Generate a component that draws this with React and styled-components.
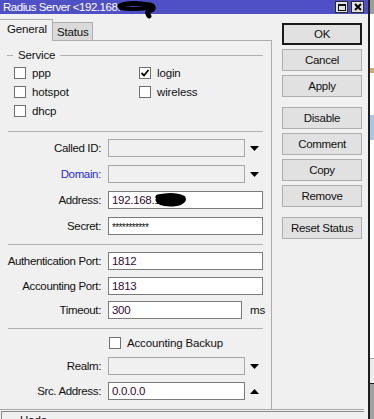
import React from 'react';
import styled, { createGlobalStyle } from 'styled-components';

const Global = createGlobalStyle`
  html, body { margin: 0; padding: 0; background: #ffffff; }
  body { font-family: "Liberation Sans", Arial, sans-serif; }
  #root { width: 374px; height: 419px; overflow: hidden; }
`;

const Page = styled.div`
  display: flex;
  width: 374px;
  height: 419px;
  overflow: hidden;
`;

const Window = styled.div`
  width: 368px;
  height: 419px;
  flex-shrink: 0;
  background: #f0f0f0;
  border-right: 2px solid #1c1c1c;
  display: flex;
  flex-direction: column;
  overflow: hidden;
  font-size: 11px;
  letter-spacing: -0.15px;
  color: #111;
`;

const TitleBar = styled.div`
  height: 14px;
  flex-shrink: 0;
  background: #4f4fc6;
  color: #fff;
  display: flex;
  align-items: center;
  padding-left: 3px;
  position: relative;
`;

const TitleText = styled.span`
  font-size: 11.5px;
  letter-spacing: -0.45px;
  line-height: 14px;
`;

const Scribble = styled.svg`
  position: absolute;
  overflow: visible;
`;

const TitleButtons = styled.div`
  margin-left: auto;
  margin-right: 4px;
  display: flex;
  gap: 3px;
`;

const TitleButton = styled.div`
  width: 13px;
  height: 12px;
  box-sizing: border-box;
  background: #e2e2e2;
  border: 1px solid #2a2a2a;
  display: flex;
  align-items: center;
  justify-content: center;
`;

const MaxGlyph = styled.div`
  width: 8px;
  height: 7px;
  box-sizing: border-box;
  border: 1px solid #111;
  border-top-width: 2px;
`;

const Body = styled.div`
  flex: 1;
  display: flex;
  min-height: 0;
`;

const LeftColumn = styled.div`
  width: 272px;
  padding-top: 5px;
  display: flex;
  flex-direction: column;
`;

const TabRow = styled.div`
  display: flex;
  align-items: flex-end;
  height: 22px;
  flex-shrink: 0;
`;

const Tab = styled.div`
  box-sizing: border-box;
  width: ${p => p.$width}px;
  height: ${p => (p.$active ? 22 : 19)}px;
  background: ${p => (p.$active ? '#f0f0f0' : '#dadada')};
  border-top: 1px solid #adadad;
  border-right: 1px solid #adadad;
  border-bottom: ${p => (p.$active ? 'none' : '1px solid #adadad')};
  padding-left: ${p => (p.$active ? 7 : 4)}px;
  display: flex;
  align-items: center;
  font-size: 11.5px;
  padding-bottom: ${p => (p.$active ? 3 : 0)}px;
`;

const TabFill = styled.div`
  flex: 1;
  height: 1px;
  background: #adadad;
`;

const Panel = styled.div`
  box-sizing: border-box;
  height: 368px;
  border-right: 1px solid #adadad;
  padding-top: 8px;
  display: flex;
  flex-direction: column;
`;

const Legend = styled.div`
  display: flex;
  align-items: center;
  height: 12px;
  margin-left: 7px;
  width: 256px;
  gap: 5px;
  font-size: 11.5px;
`;

const LegendLine = styled.div`
  height: 1px;
  background: #b0b0b0;
  flex: ${p => (p.$grow ? 1 : 'none')};
  width: ${p => (p.$grow ? 'auto' : '6px')};
`;

const CheckGrid = styled.div`
  display: grid;
  grid-template-columns: 125px 125px;
  row-gap: 7px;
  margin-top: 6px;
  padding-left: 14px;
`;

const CheckItem = styled.div`
  display: flex;
  align-items: center;
  gap: 6px;
  height: 12px;
  margin-left: ${p => p.$indent || 0}px;
  margin-top: ${p => p.$top || 0}px;
  font-size: 11.5px;
`;

const Box = styled.div`
  width: 12px;
  height: 12px;
  box-sizing: border-box;
  background: #fff;
  border: 1px solid #707070;
  display: flex;
  align-items: center;
  justify-content: center;
`;

const Separator = styled.div`
  margin-left: 8px;
  width: 255px;
  height: 1px;
  background: #b0b0b0;
  margin-top: ${p => p.$top}px;
`;

const Fields = styled.div`
  display: flex;
  flex-direction: column;
  gap: ${p => p.$gap}px;
  margin-top: ${p => p.$top}px;
`;

const Row = styled.div`
  display: flex;
  align-items: center;
  height: 18px;
`;

const Label = styled.div`
  width: 101px;
  text-align: right;
  white-space: nowrap;
  color: ${p => (p.$link ? '#2a2ad6' : '#111')};
  font-size: 11.5px;
  letter-spacing: -0.35px;
`;

const Field = styled.div`
  position: relative;
  box-sizing: border-box;
  margin-left: 7px;
  width: ${p => p.$width}px;
  height: 18px;
  background: ${p => (p.$disabled ? '#f0f0f0' : '#ffffff')};
  border: 1px solid ${p => (p.$disabled ? '#a6a6a6' : '#7a7a7a')};
  padding-left: 3px;
  display: flex;
  align-items: center;
  color: #330a33;
  font-size: 11.5px;
  letter-spacing: -0.3px;
  white-space: nowrap;
  overflow: hidden;
`;

const Stars = styled.span`
  font-size: 10px;
  letter-spacing: -0.6px;
  color: #111;
  margin-top: 2px;
`;

const Arrow = styled.svg`
  margin-left: 5px;
  flex-shrink: 0;
`;

const Unit = styled.span`
  margin-left: 8px;
  font-size: 11.5px;
`;

const RightColumn = styled.div`
  margin-left: 10px;
  padding-top: 9px;
  width: 80px;
  display: flex;
  flex-direction: column;
  gap: 4px;
`;

const Button = styled.div`
  box-sizing: border-box;
  height: 22px;
  background: #e1e1e1;
  border: ${p => (p.$default ? '2px solid #1a1a1a' : '1px solid #adadad')};
  display: flex;
  align-items: center;
  justify-content: center;
  font-size: 11.5px;
  letter-spacing: -0.3px;
  margin-top: ${p => (p.$groupStart ? 6 : 0)}px;
  color: #111;
`;

const StatusWrap = styled.div`
  height: 10px;
  flex-shrink: 0;
  width: 364px;
  border-top: 1px solid #a8a8a8;
  padding-top: 1px;
  box-sizing: border-box;
  display: flex;
`;

const StatusBox = styled.div`
  flex: 1;
  margin-left: 1px;
  border-left: 1px solid #8a8a8a;
  border-top: 1px solid #8a8a8a;
  padding-left: 18px;
  padding-top: 1px;
  overflow: hidden;
  font-size: 11.5px;
  line-height: 14px;
  color: #111;
`;

const Outside = styled.div`
  flex: 1;
  display: flex;
  flex-direction: column;
`;

const Strip = styled.div`
  height: ${p => p.$h}px;
  background: ${p => p.$c};
  flex: ${p => (p.$grow ? 1 : 'none')};
`;

const Down = () => (
  <Arrow width="9" height="5" viewBox="0 0 9 5">
    <path d="M0 0 H9 L4.5 5 Z" fill="#000" />
  </Arrow>
);

const Up = () => (
  <Arrow width="9" height="5" viewBox="0 0 9 5">
    <path d="M0 5 H9 L4.5 0 Z" fill="#000" />
  </Arrow>
);

const Check = ({ checked, children, indent, top }) => (
  <CheckItem $indent={indent} $top={top}>
    <Box>
      {checked && (
        <svg width="10" height="10" viewBox="0 0 10 10">
          <path d="M1.5 5 L4 7.5 L8.5 2" stroke="#000" strokeWidth="1.8" fill="none" />
        </svg>
      )}
    </Box>
    <span>{children}</span>
  </CheckItem>
);

export default function App() {
  return (
    <>
      <Global />
      <Page>
        <Window>
          <TitleBar>
            <TitleText>Radius Server &lt;192.168.</TitleText>
            <Scribble style={{ left: 118, top: 1 }} width="38" height="17" viewBox="0 0 38 17">
              <path d="M2 5 C 8 2, 20 2, 32 4 C 36 5, 36 8, 33 9 C 28 10, 30 13, 31 15" stroke="#000" strokeWidth="5" strokeLinecap="round" fill="none" />
              <path d="M3 7 C 12 9, 22 8, 30 7" stroke="#000" strokeWidth="4" strokeLinecap="round" fill="none" />
            </Scribble>
            <TitleButtons>
              <TitleButton><MaxGlyph /></TitleButton>
              <TitleButton>
                <svg width="8" height="8" viewBox="0 0 8 8">
                  <path d="M1 1 L7 7 M7 1 L1 7" stroke="#000" strokeWidth="2" />
                </svg>
              </TitleButton>
            </TitleButtons>
          </TitleBar>
          <Body>
            <LeftColumn>
              <TabRow>
                <Tab $active $width={53}>General</Tab>
                <Tab $width={40}>Status</Tab>
                <TabFill />
              </TabRow>
              <Panel>
                <Legend>
                  <LegendLine />
                  <span>Service</span>
                  <LegendLine $grow />
                </Legend>
                <CheckGrid>
                  <Check>ppp</Check>
                  <Check checked>login</Check>
                  <Check>hotspot</Check>
                  <Check>wireless</Check>
                  <Check>dhcp</Check>
                </CheckGrid>
                <Separator $top={14} />
                <Fields $top={7} $gap={8}>
                  <Row>
                    <Label>Called ID:</Label>
                    <Field $disabled $width={137} />
                    <Down />
                  </Row>
                  <Row>
                    <Label $link>Domain:</Label>
                    <Field $disabled $width={137} />
                    <Down />
                  </Row>
                  <Row>
                    <Label>Address:</Label>
                    <Field $width={155}>
                      192.168.1
                      <Scribble style={{ left: 46, top: 1 }} width="32" height="14" viewBox="0 0 32 14">
                        <path d="M3 4 C 12 2, 22 2, 28 5 C 30 8, 24 11, 15 11 C 8 11, 4 10, 3 7" stroke="#000" strokeWidth="5" strokeLinecap="round" fill="#000" />
                      </Scribble>
                    </Field>
                  </Row>
                  <Row>
                    <Label>Secret:</Label>
                    <Field $width={155}><Stars>***********</Stars></Field>
                  </Row>
                </Fields>
                <Separator $top={9} />
                <Fields $top={7} $gap={6.5}>
                  <Row>
                    <Label>Authentication Port:</Label>
                    <Field $width={155}>1812</Field>
                  </Row>
                  <Row>
                    <Label>Accounting Port:</Label>
                    <Field $width={155}>1813</Field>
                  </Row>
                  <Row>
                    <Label>Timeout:</Label>
                    <Field $width={134}>300</Field>
                    <Unit>ms</Unit>
                  </Row>
                </Fields>
                <Separator $top={9} />
                <Check indent={109} top={8}>Accounting Backup</Check>
                <Fields $top={8} $gap={7}>
                  <Row>
                    <Label>Realm:</Label>
                    <Field $disabled $width={137} />
                    <Down />
                  </Row>
                  <Row>
                    <Label>Src. Address:</Label>
                    <Field $width={137}>0.0.0.0</Field>
                    <Up />
                  </Row>
                </Fields>
              </Panel>
            </LeftColumn>
            <RightColumn>
              <Button $default>OK</Button>
              <Button>Cancel</Button>
              <Button>Apply</Button>
              <Button $groupStart>Disable</Button>
              <Button>Comment</Button>
              <Button>Copy</Button>
              <Button>Remove</Button>
              <Button $groupStart>Reset Status</Button>
            </RightColumn>
          </Body>
          <StatusWrap>
            <StatusBox>Hado</StatusBox>
          </StatusWrap>
        </Window>
        <Outside>
          <Strip $h={14} $c="#9c9c9c" />
          <Strip $h={54} $c="#ffffff" />
          <Strip $h={5} $c="#d8a868" />
          <Strip $h={42} $c="#ffffff" />
          <Strip $h={25} $c="#a6c6ec" />
          <Strip $h={218} $c="#ffffff" />
          <Strip $h={1} $c="#a8a8a8" />
          <Strip $h={24} $c="#ececec" />
          <Strip $h={1} $c="#1e1e1e" />
          <Strip $grow $c="#a0a0a0" />
        </Outside>
      </Page>
    </>
  );
}
